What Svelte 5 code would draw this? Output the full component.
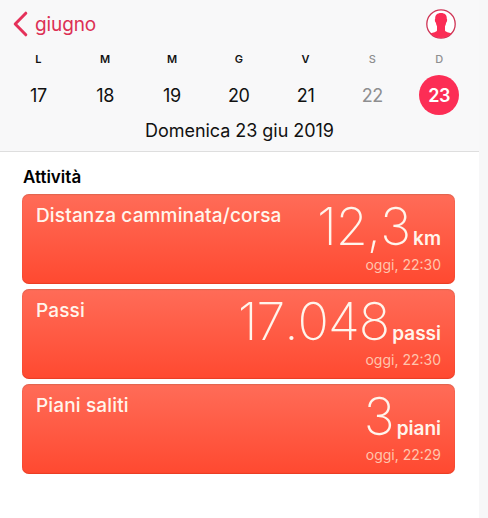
<script lang="ts">
	type Day = { letter: string; number: number; weekend?: boolean };
	type Card = { title: string; value: string; unit: string; time: string; kind: string };

	const days: Day[] = [
		{ letter: 'L', number: 17 },
		{ letter: 'M', number: 18 },
		{ letter: 'M', number: 19 },
		{ letter: 'G', number: 20 },
		{ letter: 'V', number: 21 },
		{ letter: 'S', number: 22, weekend: true },
		{ letter: 'D', number: 23, weekend: true }
	];

	const cards: Card[] = [
		{ title: 'Distanza camminata/corsa', value: '12,3', unit: 'km', time: 'oggi, 22:30', kind: 'distance' },
		{ title: 'Passi', value: '17.048', unit: 'passi', time: 'oggi, 22:30', kind: 'steps' },
		{ title: 'Piani saliti', value: '3', unit: 'piani', time: 'oggi, 22:29', kind: 'floors' }
	];

	let selected = $state(23);
</script>

<div class="screen">
	<header>
		<nav>
			<a class="back" href="#giugno">
				<svg width="15" height="26" viewBox="0 0 15 26" aria-hidden="true">
					<path d="M12.8 2.2 2.2 13l10.6 10.8" />
				</svg>
				<span>giugno</span>
			</a>
			<svg class="profile" width="30" height="30" viewBox="0 0 30 30" aria-hidden="true">
				<circle cx="15" cy="15" r="14.2" />
				<path
					d="M15 4c-3.9 0-6 2.1-5.8 5.7-.8.4-.2 3.4.7 4 .2 1.5.6 2.6 1.1 3.500v4.300c-.4 1.500-3.800 1.900-6.300 3A14 14 0 0 0 15 29a14 14 0 0 0 10.300-4.500c-2.500-1.100-5.900-1.500-6.300-3v-4.300c.5-.9.9-2 1.100-3.500.9-.6 1.500-3.600.7-4C21 6.100 18.900 4 15 4Z"
				/>
			</svg>
		</nav>

		<div class="week">
			{#each days as day}
				<button class="day" class:weekend={day.weekend} onclick={() => (selected = day.number)}>
					<span class="letter">{day.letter}</span>
					<span class="number" class:selected={day.number === selected}>{day.number}</span>
				</button>
			{/each}
		</div>

		<div class="date">Domenica {selected} giu 2019</div>
	</header>

	<main>
		<h2><span>Attività</span></h2>
		{#each cards as card}
			<section class="card {card.kind}">
				<h3><span>{card.title}</span></h3>
				<div class="reading">
					<div class="amount">
						<span class="value">{card.value}</span>
						<span class="unit">{card.unit}</span>
					</div>
					<div class="time"><span>{card.time}</span></div>
				</div>
			</section>
		{/each}
	</main>
</div>

<style>
	:global(body) {
		background: #f7f7f8;
	}
	.screen {
		width: 479px;
		height: 518px;
		overflow: hidden;
		background: #fff;
		color: #111;
		font-family: Inter, 'Liberation Sans', sans-serif;
	}
	header {
		box-sizing: border-box;
		height: 152px;
		background: #f8f8f9;
		border-bottom: 1px solid #dedede;
	}
	nav {
		display: flex;
		justify-content: space-between;
		align-items: center;
		height: 48px;
		padding: 0 23px 0 13px;
	}
	.back {
		display: flex;
		align-items: center;
		gap: 7px;
		color: #dc3054;
		font-size: 19px;
		line-height: 24px;
		letter-spacing: -0.1px;
		text-decoration: none;
	}
	.back span {
		padding-top: 1px;
	}
	.back path {
		fill: none;
		stroke: #e5315a;
		stroke-width: 3;
		stroke-linecap: round;
		stroke-linejoin: round;
	}
	.profile circle {
		fill: #fff;
		stroke: #cf3556;
		stroke-width: 1.3;
	}
	.profile path {
		fill: #fb2c55;
	}
	.week {
		display: grid;
		grid-template-columns: repeat(7, 66.8px);
		padding: 5px 0 0 5px;
	}
	.day {
		display: flex;
		flex-direction: column;
		align-items: center;
		gap: 10px;
		padding: 0;
		border: 0;
		background: none;
		color: inherit;
		font: inherit;
	}
	.letter {
		font-size: 11px;
		font-weight: 600;
		line-height: 12px;
	}
	.number {
		width: 40px;
		height: 40px;
		border-radius: 50%;
		font-size: 18px;
		line-height: 41px;
		letter-spacing: -0.3px;
		text-align: center;
		font-kerning: none;
	}
	.weekend {
		color: #8e8e90;
	}
	.weekend .letter {
		font-weight: 500;
	}
	.number.selected {
		background: #fc2d55;
		color: #fff;
		font-weight: 600;
	}
	.date {
		margin-top: 4px;
		font-size: 18px;
		line-height: 24px;
		letter-spacing: -0.04px;
		text-align: center;
	}
	main {
		display: flex;
		flex-direction: column;
		gap: 5px;
		width: 433px;
		padding: 13px 0 0 22px;
	}
	h2 {
		margin: 0;
		padding-left: 1px;
		color: #000;
		font-size: 17px;
		font-weight: 600;
		line-height: 24px;
	}
	.card {
		display: flex;
		justify-content: space-between;
		box-sizing: border-box;
		height: 90px;
		padding: 0 14px;
		border-radius: 7px;
		background: linear-gradient(#ff6c58, #ff4930);
		box-shadow:
			inset 0 1px 1px rgba(165, 85, 65, 0.35),
			inset 0 -1px 1px rgba(200, 45, 20, 0.4);
		color: #fff5ec;
	}
	h3 {
		margin: 10px 0 0;
		font-size: 19px;
		font-weight: 500;
		line-height: 24px;
		letter-spacing: 0.15px;
		white-space: nowrap;
	}
	.reading {
		display: flex;
		flex-direction: column;
		align-items: flex-end;
	}
	.amount {
		display: flex;
		align-items: baseline;
		gap: 3px;
		height: 62px;
		line-height: 66px;
	}
	.value {
		font-size: 52px;
		font-weight: 250;
		letter-spacing: -1px;
		font-kerning: none;
	}
	.unit {
		font-size: 19px;
		font-weight: 600;
	}
	.time {
		color: #ffc5ad;
		font-size: 14px;
		line-height: 18px;
	}
</style>
